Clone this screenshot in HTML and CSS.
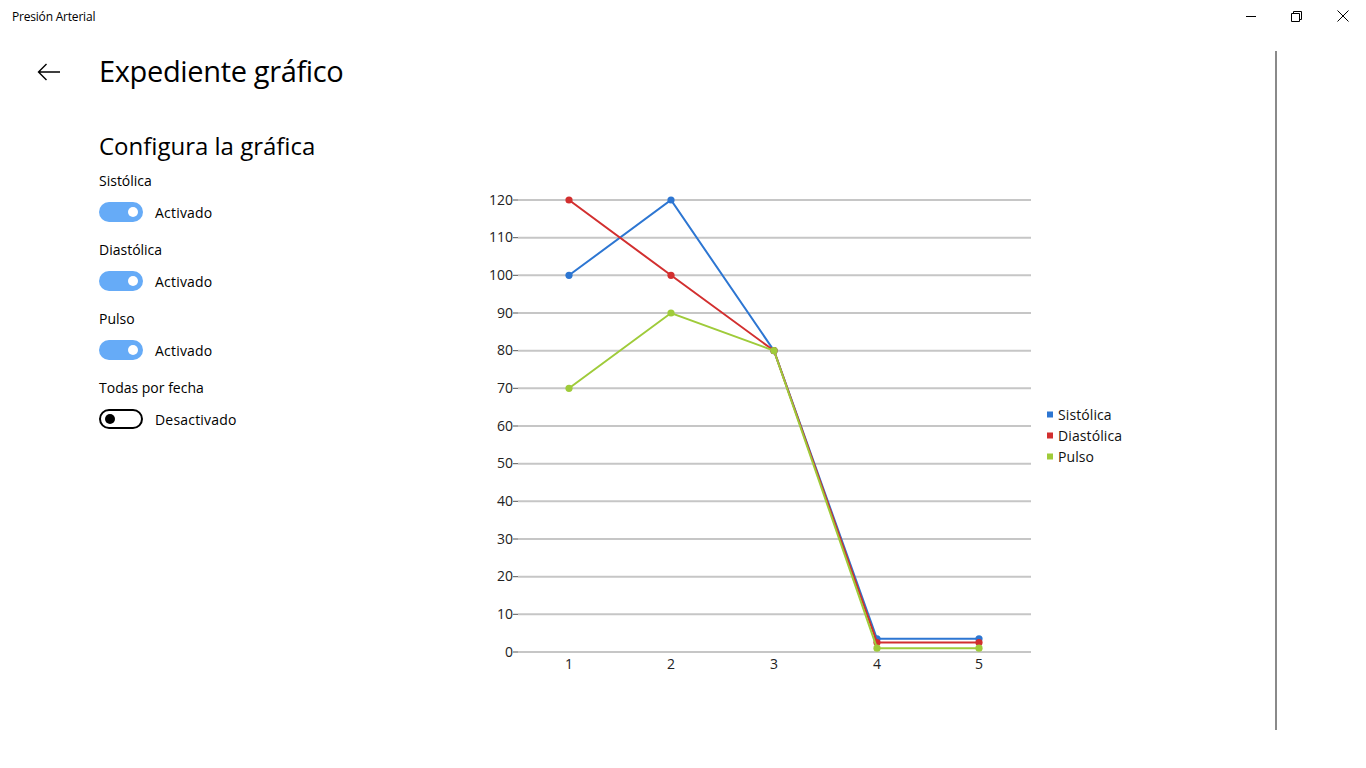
FILE: index.html
```html
<!DOCTYPE html>
<html lang="es">
<head>
<meta charset="utf-8">
<title>Presión Arterial</title>
<link rel="stylesheet" href="styles.css">
</head>
<body>
<div class="window">
  <header class="titlebar">
    <span class="app-title">Presión Arterial</span>
    <div class="controls">
      <span class="ctl"><svg width="12" height="12" viewBox="0 0 12 12"><path d="M1 6.5H11" stroke="#000" stroke-width="1"/></svg></span>
      <span class="ctl"><svg width="12" height="12" viewBox="0 0 12 12"><path d="M0.5 3.5H8.5V11.5H0.5Z M2.5 3.5V1.5H10.5V9.5H8.5" fill="none" stroke="#000" stroke-width="1"/></svg></span>
      <span class="ctl"><svg width="12" height="12" viewBox="0 0 12 12"><path d="M0.5 0.5L11.5 11.5M11.5 0.5L0.5 11.5" stroke="#000" stroke-width="1"/></svg></span>
    </div>
  </header>
  <div class="page">
    <nav class="nav">
      <svg class="back" width="24" height="18" viewBox="0 0 24 18"><path d="M1.5 9H23 M9.5 1L1.5 9L9.5 17" fill="none" stroke="#000" stroke-width="1.4"/></svg>
    </nav>
    <main class="content">
      <h1 class="page-title">Expediente gráfico</h1>
      <div class="body">
        <section class="settings">
          <h2 class="section-title">Configura la gráfica</h2>
          <div class="group">
            <div class="label">Sistólica</div>
            <div class="toggle-row"><span class="toggle on"><span class="knob"></span></span><span class="state">Activado</span></div>
          </div>
          <div class="group">
            <div class="label">Diastólica</div>
            <div class="toggle-row"><span class="toggle on"><span class="knob"></span></span><span class="state">Activado</span></div>
          </div>
          <div class="group">
            <div class="label">Pulso</div>
            <div class="toggle-row"><span class="toggle on"><span class="knob"></span></span><span class="state">Activado</span></div>
          </div>
          <div class="group">
            <div class="label">Todas por fecha</div>
            <div class="toggle-row"><span class="toggle off"><span class="knob"></span></span><span class="state">Desactivado</span></div>
          </div>
        </section>
        <svg class="chart" width="680" height="510" viewBox="470 180 680 510">
          <g class="grid">
            <line x1="518" x2="1031" y1="200" y2="200"/>
            <line x1="518" x2="1031" y1="237.7" y2="237.7"/>
            <line x1="518" x2="1031" y1="275.3" y2="275.3"/>
            <line x1="518" x2="1031" y1="313" y2="313"/>
            <line x1="518" x2="1031" y1="350.7" y2="350.7"/>
            <line x1="518" x2="1031" y1="388.3" y2="388.3"/>
            <line x1="518" x2="1031" y1="426" y2="426"/>
            <line x1="518" x2="1031" y1="463.7" y2="463.7"/>
            <line x1="518" x2="1031" y1="501.3" y2="501.3"/>
            <line x1="518" x2="1031" y1="539" y2="539"/>
            <line x1="518" x2="1031" y1="576.7" y2="576.7"/>
            <line x1="518" x2="1031" y1="614.3" y2="614.3"/>
            <line x1="518" x2="1031" y1="652" y2="652"/>
          </g>
          <g class="ticks">
            <line x1="513" x2="518" y1="200" y2="200"/>
            <line x1="513" x2="518" y1="237.7" y2="237.7"/>
            <line x1="513" x2="518" y1="275.3" y2="275.3"/>
            <line x1="513" x2="518" y1="313" y2="313"/>
            <line x1="513" x2="518" y1="350.7" y2="350.7"/>
            <line x1="513" x2="518" y1="388.3" y2="388.3"/>
            <line x1="513" x2="518" y1="426" y2="426"/>
            <line x1="513" x2="518" y1="463.7" y2="463.7"/>
            <line x1="513" x2="518" y1="501.3" y2="501.3"/>
            <line x1="513" x2="518" y1="539" y2="539"/>
            <line x1="513" x2="518" y1="576.7" y2="576.7"/>
            <line x1="513" x2="518" y1="614.3" y2="614.3"/>
            <line x1="513" x2="518" y1="652" y2="652"/>
          </g>
          <g class="ylabels">
            <text x="513" y="201">120</text>
            <text x="513" y="238.7">110</text>
            <text x="513" y="276.3">100</text>
            <text x="513" y="314">90</text>
            <text x="513" y="351.7">80</text>
            <text x="513" y="389.3">70</text>
            <text x="513" y="427">60</text>
            <text x="513" y="464.7">50</text>
            <text x="513" y="502.3">40</text>
            <text x="513" y="540">30</text>
            <text x="513" y="577.7">20</text>
            <text x="513" y="615.3">10</text>
            <text x="513" y="653">0</text>
          </g>
          <g class="xlabels">
            <text x="569" y="665">1</text>
            <text x="671" y="665">2</text>
            <text x="774" y="665">3</text>
            <text x="877" y="665">4</text>
            <text x="979" y="665">5</text>
          </g>
          <g class="series blue">
            <polyline points="569,275.3 671,200 774,350.7 877,638.8 979,638.8"/>
            <circle cx="569" cy="275.3" r="3.6"/><circle cx="671" cy="200" r="3.6"/><circle cx="774" cy="350.7" r="3.6"/><circle cx="877" cy="638.8" r="3.6"/><circle cx="979" cy="638.8" r="3.6"/>
          </g>
          <g class="series red">
            <polyline points="569,200 671,275.3 774,350.7 877,642.6 979,642.6"/>
            <circle cx="569" cy="200" r="3.6"/><circle cx="671" cy="275.3" r="3.6"/><circle cx="774" cy="350.7" r="3.6"/><circle cx="877" cy="642.6" r="3.6"/><circle cx="979" cy="642.6" r="3.6"/>
          </g>
          <g class="series green">
            <polyline points="569,388.3 671,313 774,350.7 877,648.2 979,648.2"/>
            <circle cx="569" cy="388.3" r="3.6"/><circle cx="671" cy="313" r="3.6"/><circle cx="774" cy="350.7" r="3.6"/><circle cx="877" cy="648.2" r="3.6"/><circle cx="979" cy="648.2" r="3.6"/>
          </g>
          <g class="legend">
            <rect class="sw-blue" x="1047" y="411.5" width="6" height="6"/>
            <text x="1058" y="416">Sistólica</text>
            <rect class="sw-red" x="1047" y="432.5" width="6" height="6"/>
            <text x="1058" y="437">Diastólica</text>
            <rect class="sw-green" x="1047" y="453.5" width="6" height="6"/>
            <text x="1058" y="458">Pulso</text>
          </g>
        </svg>
      </div>
    </main>
    <div class="scrollbar"></div>
  </div>
</div>
</body>
</html>
```
FILE: styles.css
```css
html, body {
  margin: 0;
  padding: 0;
  background: #fff;
}
body {
  font-family: "Open Sans", "Noto Sans", "Liberation Sans", sans-serif;
  color: #000;
  width: 1366px;
  height: 768px;
  overflow: hidden;
}
.titlebar {
  height: 32px;
  display: flex;
  align-items: center;
  justify-content: space-between;
}
.app-title {
  font-size: 12px;
  padding-left: 12px;
  letter-spacing: -0.2px;
}
.controls {
  display: flex;
  height: 32px;
}
.ctl {
  width: 46px;
  height: 32px;
  display: flex;
  align-items: center;
  justify-content: center;
}
.page {
  display: flex;
  height: 736px;
}
.nav {
  width: 99px;
  flex: none;
}
.back {
  display: block;
  margin: 31px 0 0 37px;
}
.content {
  flex: 1;
  display: flex;
  flex-direction: column;
}
.page-title {
  margin: 0;
  height: 76px;
  display: flex;
  align-items: center;
  font-size: 29px;
  font-weight: 400;
  letter-spacing: -0.35px;
  margin-bottom: 4px;
}
.body {
  display: flex;
  align-items: flex-start;
}
.settings {
  width: 371px;
  flex: none;
  padding-top: 18px;
}
.section-title {
  margin: 0;
  font-size: 24px;
  font-weight: 400;
  line-height: 32px;
  height: 32px;
  letter-spacing: 0;
}
.group {
  margin-top: 9px;
  margin-bottom: 18px;
}
.group + .group {
  margin-top: 0;
}
.label {
  font-size: 14px;
  line-height: 20px;
  height: 20px;
  letter-spacing: 0;
}
.toggle-row {
  margin-top: 11px;
  display: flex;
  align-items: center;
  height: 20px;
}
.toggle {
  box-sizing: border-box;
  width: 44px;
  height: 20px;
  border-radius: 10px;
  display: flex;
  align-items: center;
  flex: none;
}
.toggle.on {
  background: #66abf7;
  justify-content: flex-end;
  padding-right: 5px;
}
.toggle.off {
  border: 2px solid #000;
  padding-left: 4px;
}
.knob {
  width: 10px;
  height: 10px;
  border-radius: 50%;
}
.toggle.on .knob {
  background: #fff;
}
.toggle.off .knob {
  background: #000;
}
.state {
  font-size: 14px;
  margin-left: 12px;
  letter-spacing: 0.2px;
}
.chart {
  display: block;
  flex: none;
  margin-top: 68px;
  font-family: "Open Sans", "Noto Sans", sans-serif;
}
.grid line {
  stroke: #c6c6c6;
  stroke-width: 2;
}
.ticks line {
  stroke: #555;
  stroke-width: 1;
}
.ylabels text {
  font-size: 14px;
  text-anchor: end;
  dominant-baseline: middle;
  fill: #222;
}
.xlabels text {
  font-size: 14px;
  text-anchor: middle;
  dominant-baseline: middle;
  fill: #222;
}
.series polyline {
  fill: none;
  stroke-width: 2;
}
.series.blue polyline { stroke: #2d76d2; }
.series.blue circle { fill: #2d76d2; }
.series.red polyline { stroke: #d22f2f; }
.series.red circle { fill: #d22f2f; }
.series.green polyline { stroke: #9fcb3a; }
.series.green circle { fill: #9fcb3a; }
.legend text {
  font-size: 14px;
  dominant-baseline: middle;
  fill: #111;
  letter-spacing: 0.1px;
}
.sw-blue { fill: #2d76d2; }
.sw-red { fill: #d22f2f; }
.sw-green { fill: #9fcb3a; }
.scrollbar {
  width: 2px;
  height: 679px;
  margin-top: 19px;
  margin-right: 89px;
  background: #8a8a8a;
  flex: none;
}
```
